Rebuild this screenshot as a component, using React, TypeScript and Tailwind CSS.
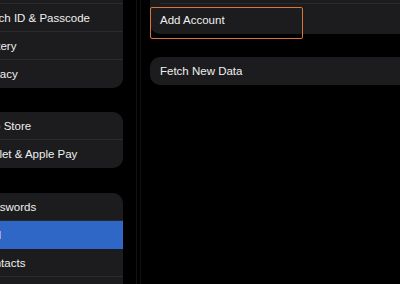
import React from "react";

const font = { fontFamily: '"Liberation Sans", Arial, sans-serif' };

function Row({ label, sep = true, active = false }: { label: string; sep?: boolean; active?: boolean }) {
  return (
    <div className={`relative h-[28px] shrink-0 flex items-center pl-[40px] ${active ? "bg-[#2f67c6]" : ""}`}>
      <span className="text-[11.5px] text-[#efefef] whitespace-nowrap mt-[2px]">{label}</span>
      {sep && !active && <div className="absolute bottom-0 left-0 right-0 h-px bg-[#2a2a2c]" />}
    </div>
  );
}

export default function App() {
  return (
    <div className="w-[400px] h-[284px] bg-black overflow-hidden flex items-start" style={font}>
      <div className="ml-[-60px] w-[183px] shrink-0 flex flex-col mt-[-24px]">
        <div className="shrink-0 rounded-[10px] bg-[#1c1c1e] overflow-hidden">
          <Row label="Face & Control" />
          <Row label="Touch ID & Passcode" />
          <Row label="Battery" />
          <Row label="Privacy" sep={false} />
        </div>
        <div className="shrink-0 mt-[24px] rounded-[10px] bg-[#1c1c1e] overflow-hidden">
          <Row label="App Store" />
          <Row label="Wallet & Apple Pay" sep={false} />
        </div>
        <div className="shrink-0 mt-[25px] rounded-[10px] bg-[#1c1c1e] overflow-hidden">
          <Row label="Passwords" />
          <Row label="Mail" active />
          <Row label="Contacts" />
          <Row label="Calendar" sep={false} />
        </div>
      </div>
      <div className="w-[13px] shrink-0" />
      <div className="w-px h-[284px] shrink-0 bg-[#111112]" />
      <div className="w-[3px] shrink-0" />
      <div className="w-px h-[284px] shrink-0 bg-[#111112]" />
      <div className="w-[9px] shrink-0" />
      <div className="w-[270px] shrink-0 flex flex-col mt-[-24px]">
        <div className="shrink-0 rounded-[10px] bg-[#1c1c1e] overflow-hidden">
          <div className="relative h-[28px] flex items-center px-[10px]">
            <span className="text-[11.5px] text-[#efefef]">Accounts</span>
            <div className="absolute bottom-0 left-[10px] right-0 h-px bg-[#2a2a2c]" />
          </div>
          <div className="relative h-[30px] flex items-center px-[10px]">
            <span className="text-[11.5px] text-[#efefef] mt-[4px]">Add Account</span>
          </div>
        </div>
        <div className="relative">
          <div className="absolute left-0 top-[-27px] w-[153px] h-[32px] border-[1.5px] border-[#d9773b] rounded-[2px]" />
        </div>
        <div className="shrink-0 mt-[23px] rounded-[10px] bg-[#1c1c1e] h-[28px] flex items-center px-[10px]">
          <span className="text-[11.5px] text-[#efefef] mt-[2px]">Fetch New Data</span>
        </div>
      </div>
    </div>
  );
}
